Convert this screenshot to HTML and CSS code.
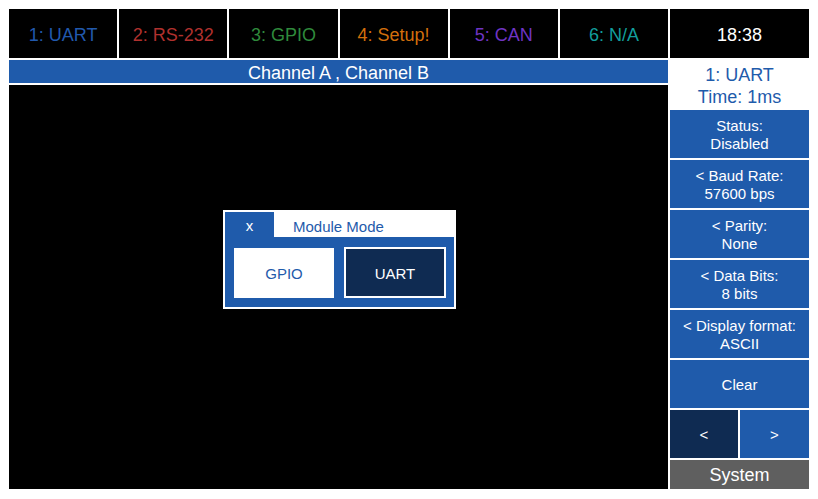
FILE: index.html
```html
<!DOCTYPE html>
<html>
<head>
<meta charset="utf-8">
<link rel="stylesheet" href="styles.css">
</head>
<body>
<div class="app">
  <div class="left">
    <div class="tabs">
      <div class="tab t1">1: UART</div>
      <div class="tab t2">2: RS-232</div>
      <div class="tab t3">3: GPIO</div>
      <div class="tab t4">4: Setup!</div>
      <div class="tab t5">5: CAN</div>
      <div class="tab t6">6: N/A</div>
    </div>
    <div class="channel">Channel A , Channel B</div>
    <div class="screen">
      <div class="dialog">
        <div class="dlg-head">
          <div class="dlg-close">x</div>
          <div class="dlg-title">Module Mode</div>
        </div>
        <div class="dlg-body">
          <div class="opt opt-light">GPIO</div>
          <div class="opt opt-dark">UART</div>
        </div>
      </div>
    </div>
  </div>
  <div class="right">
    <div class="clock">18:38</div>
    <div class="info">
      <div>1: UART</div>
      <div>Time: 1ms</div>
    </div>
    <div class="btn">Status:<br>Disabled</div>
    <div class="btn">&lt; Baud Rate:<br>57600 bps</div>
    <div class="btn">&lt; Parity:<br>None</div>
    <div class="btn">&lt; Data Bits:<br>8 bits</div>
    <div class="btn">&lt; Display format:<br>ASCII</div>
    <div class="btn">Clear</div>
    <div class="nav">
      <div class="btn nav-btn dark">&lt;</div>
      <div class="btn nav-btn">&gt;</div>
    </div>
    <div class="system">System</div>
  </div>
</div>
</body>
</html>
```
FILE: styles.css
```css
* { box-sizing: border-box; }
html, body { margin: 0; padding: 0; background: #ffffff; }
body {
  font-family: "Liberation Sans", Arial, sans-serif;
  padding: 9px;
}
.app {
  display: grid;
  grid-template-columns: 659px 139px;
  column-gap: 2px;
  width: 800px;
}
.left, .right {
  display: flex;
  flex-direction: column;
  gap: 2px;
}
.tabs {
  display: flex;
  gap: 2px;
  height: 49px;
}
.tab {
  flex: 1;
  background: #000;
  display: flex;
  align-items: center;
  justify-content: center;
  font-size: 18px;
  padding-top: 3px;
}
.t1 { color: #2159ad; }
.t2 { color: #b0312e; }
.t3 { color: #2f8a3c; }
.t4 { color: #d36f0c; }
.t5 { color: #6f34c4; }
.t6 { color: #129e9c; }
.channel {
  height: 23px;
  background: #1f5bab;
  color: #fff;
  font-size: 18px;
  line-height: 23px;
  padding-top: 2px;
  text-align: center;
}
.screen {
  height: 404px;
  background: #000;
  position: relative;
}
.dialog {
  position: absolute;
  left: 214px;
  top: 125px;
  width: 233px;
  height: 99px;
  border: 2px solid #fff;
  background: #1f5bab;
  display: flex;
  flex-direction: column;
}
.dlg-head {
  display: flex;
  height: 25px;
  background: #fff;
}
.dlg-close {
  width: 49px;
  background: #1f5bab;
  color: #fff;
  font-size: 15px;
  display: flex;
  align-items: center;
  justify-content: center;
  padding-top: 2px;
}
.dlg-title {
  flex: 1;
  color: #1f5bab;
  font-size: 15px;
  padding-left: 19px;
  display: flex;
  align-items: center;
  padding-top: 4px;
}
.dlg-body {
  flex: 1;
  display: flex;
  justify-content: space-between;
  align-items: center;
  padding: 1px 8px 0 9px;
}
.opt {
  height: 51px;
  display: flex;
  align-items: center;
  justify-content: center;
  font-size: 15px;
  padding-top: 1px;
}
.opt-light {
  width: 100px;
  height: 50px;
  background: #fff;
  color: #1f5bab;
}
.opt-dark {
  width: 102px;
  background: #0f2b52;
  border: 2px solid #fff;
  color: #fff;
}
.clock {
  height: 49px;
  background: #000;
  color: #fff;
  font-size: 18px;
  display: flex;
  align-items: center;
  justify-content: center;
  padding-top: 3px;
}
.info {
  height: 48px;
  color: #1f5bab;
  font-size: 18px;
  line-height: 22px;
  text-align: center;
  display: flex;
  flex-direction: column;
  justify-content: center;
  padding-top: 3px;
}
.btn {
  height: 48px;
  background: #1f5bab;
  color: #fff;
  font-size: 15px;
  line-height: 18px;
  text-align: center;
  display: flex;
  align-items: center;
  justify-content: center;
  padding-top: 2px;
}
.nav {
  display: flex;
  gap: 2px;
}
.nav-btn { flex: 1; }
.nav-btn.dark { background: #0f2b52; flex: 0 0 68px; }
.system {
  height: 29px;
  background: #5f5f5f;
  color: #fff;
  font-size: 18px;
  display: flex;
  align-items: center;
  justify-content: center;
  padding-top: 2px;
}
```
